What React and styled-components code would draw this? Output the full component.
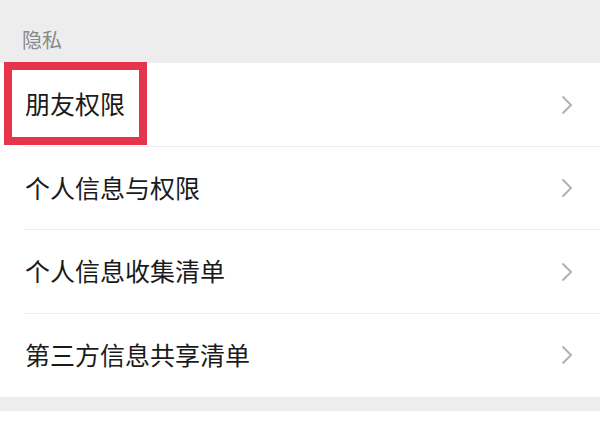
import React from 'react';
import styled, { createGlobalStyle } from 'styled-components';

const GlobalStyle = createGlobalStyle`
  html, body {
    margin: 0;
    padding: 0;
    background: #ffffff;
  }
  body {
    font-family: "Noto Sans CJK SC", "Noto Sans", sans-serif;
  }
`;

const items = ['朋友权限', '个人信息与权限', '个人信息收集清单', '第三方信息共享清单'];

const App = () => {
  return (
    <Page>
      <GlobalStyle />
      <SectionTitle>隐私</SectionTitle>
      <List>
        {items.map((label, i) => (
          <Row key={label} last={i === items.length - 1}>
            <Label>{label}</Label>
            <Chevron viewBox="0 0 12 20" aria-hidden="true">
              <path d="M1.5 1.5 L10 10 L1.5 18.5" />
            </Chevron>
            {i === 0 && <Highlight />}
          </Row>
        ))}
      </List>
      <Gap />
    </Page>
  );
};

export default App;

const Page = styled.div`
  width: 600px;
  background: #ffffff;
`;

const SectionTitle = styled.div`
  height: 63px;
  box-sizing: border-box;
  background: #ededed;
  padding: 26px 0 0 22px;
  font-size: 20px;
  line-height: 28px;
  color: #8a8a8a;
`;

const List = styled.div`
  display: flex;
  flex-direction: column;
  background: #ffffff;
`;

const Row = styled.div`
  position: relative;
  height: 83.5px;
  display: flex;
  align-items: center;
  justify-content: space-between;
  padding: 0 27px 0 25px;

  &::after {
    content: '';
    display: ${p => (p.last ? 'none' : 'block')};
    position: absolute;
    left: 24px;
    right: 0;
    bottom: 0;
    height: 1px;
    background: #ededed;
  }
`;

const Label = styled.span`
  font-size: 25px;
  color: #1a1a1a;
  line-height: 1;
  margin-top: -2px;
`;

const Chevron = styled.svg`
  width: 12px;
  height: 20px;
  fill: none;
  stroke: #b2b2b2;
  stroke-width: 2;
`;

const Highlight = styled.div`
  position: absolute;
  left: 4px;
  top: -1px;
  width: 143px;
  height: 83px;
  box-sizing: border-box;
  border: 8px solid #e6344a;
`;

const Gap = styled.div`
  height: 14px;
  background: #ededed;
`;
